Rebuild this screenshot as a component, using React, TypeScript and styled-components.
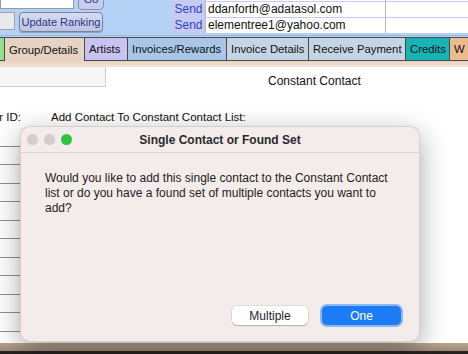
import React from "react";
import styled, { createGlobalStyle } from "styled-components";

const GlobalStyle = createGlobalStyle`
  html, body {
    margin: 0;
    padding: 0;
    background: #ffffff;
    overflow: hidden;
  }
  body {
    font-family: "Liberation Sans", Arial, sans-serif;
  }
`;

interface ITabProps {
  width: number;
  bg: string;
  active?: boolean;
}

interface ICellProps {
  width: number;
}

const Page = styled.div`
  position: relative;
  width: 468px;
  height: 354px;
  overflow: hidden;
  display: flex;
  flex-direction: column;
  background: #ffffff;
`;

const Header = styled.div`
  height: 35px;
  background: #b3d2f6;
  display: flex;
  justify-content: space-between;
  border-bottom: 1px solid #9fb8d8;
`;

const LeftControls = styled.div`
  display: flex;
  flex-direction: column;
  gap: 2px;
`;

const ControlRow = styled.div`
  display: flex;
  gap: 4px;
  align-items: flex-start;
`;

const FindInput = styled.div`
  width: 72px;
  height: 8px;
  background: #ffffff;
  border: 1px solid #9a9a9a;
  border-top: none;
`;

const GoButton = styled.div`
  width: 24px;
  height: 20px;
  margin-top: -12px;
  background: #c8cdf0;
  border: 1px solid #8c8fb0;
  border-radius: 4px;
  color: #2b3585;
  font-size: 11px;
  display: flex;
  align-items: center;
  justify-content: center;
`;

const GreyInput = styled.div`
  width: 14px;
  height: 16px;
  background: #e9e9ec;
  border: 1px solid #a0a0a8;
  border-left: none;
`;

const RankButton = styled.div`
  width: 82px;
  height: 18px;
  background: linear-gradient(#d6dcf2, #bcc4e2);
  border: 1px solid #7d829c;
  border-radius: 4px;
  color: #2b3585;
  font-size: 11px;
  display: flex;
  align-items: center;
  justify-content: center;
  box-shadow: 0 1px 1px rgba(0, 0, 0, 0.25);
`;

const SendPanel = styled.div`
  width: 297px;
  height: 33px;
  background: #c7cbf3;
  border-bottom-left-radius: 6px;
  overflow: hidden;
  display: flex;
  flex-direction: column;
  gap: 1px;
  padding-left: 1px;
  box-sizing: border-box;
`;

const SendRow = styled.div`
  display: flex;
  height: 15px;
  flex-shrink: 0;
  &:first-child {
    margin-top: -14px;
  }
`;

const SendLabel = styled.div`
  width: 33px;
  color: #3442c2;
  font-size: 12px;
  line-height: 15px;
  text-align: center;
`;

const Cell = styled.div`
  width: ${(props: ICellProps) => props.width}px;
  background: #ffffff;
  border-left: 1px solid #b8b8b8;
  font-size: 12px;
  line-height: 15px;
  padding-left: 2px;
  box-sizing: border-box;
  color: #111111;
  white-space: nowrap;
`;

const TabBar = styled.div`
  height: 25px;
  display: flex;
  background: #b3d2f6;
  padding-top: 1px;
  box-sizing: border-box;
`;

const Tab = styled.div`
  width: ${(props: ITabProps) => props.width}px;
  flex-shrink: 0;
  background: ${(props: ITabProps) => props.bg};
  border: 1px solid #4a4a4a;
  border-left: none;
  border-bottom: ${(props: ITabProps) =>
    props.active ? "none" : "1px solid #4a4a4a"};
  font-size: 11.3px;
  color: #111111;
  display: flex;
  align-items: center;
  padding-left: 4px;
  box-sizing: border-box;
  white-space: nowrap;
  overflow: hidden;
`;

const TabFooter = styled.div`
  height: 6px;
  background: linear-gradient(#e6d3c3, #efe4da);
`;

const Content = styled.div`
  flex: 1;
  display: flex;
  flex-direction: column;
`;

const TopRow = styled.div`
  height: 20px;
  display: flex;
  align-items: center;
`;

const LeftBox = styled.div`
  width: 106px;
  height: 20px;
  background: #f7f7f7;
  border-right: 1px solid #cfcfcf;
  border-bottom: 1px solid #cfcfcf;
  box-sizing: border-box;
`;

const SectionTitle = styled.div`
  margin-left: 162px;
  margin-top: 7px;
  font-size: 12px;
  color: #111111;
`;

const FieldRow = styled.div`
  margin-top: 24px;
  display: flex;
  font-size: 11.5px;
  color: #111111;
  height: 14px;
`;

const FieldLabel = styled.div`
  width: 21px;
  margin-right: 30px;
  overflow: hidden;
  white-space: nowrap;
  display: flex;
  justify-content: flex-end;
`;

const ListColumn = styled.div`
  margin-top: 3px;
  width: 40px;
  display: flex;
  flex-direction: column;
`;

const ListRow = styled.div`
  height: 18.5px;
  border-bottom: 1.5px solid #8f8f8f;
  background: linear-gradient(90deg, #ffffff 40%, #dcdcdc);
  box-sizing: border-box;
  flex-shrink: 0;
`;

const BottomEdge = styled.div`
  height: 11px;
  background: linear-gradient(#b8a692, #9e8a76 70%, #2e2a28 72%, #1e1c1c);
`;

const Dialog = styled.div`
  position: absolute;
  left: 20px;
  top: 126px;
  width: 400px;
  height: 216px;
  background: #f4ecea;
  border-radius: 10px;
  border: 1px solid rgba(0, 0, 0, 0.12);
  box-sizing: border-box;
  box-shadow: 0 8px 28px rgba(0, 0, 0, 0.35);
  display: flex;
  flex-direction: column;
`;

const TitleBar = styled.div`
  position: relative;
  height: 25px;
  border-bottom: 1px solid #ddd3d0;
  display: flex;
  align-items: center;
  justify-content: center;
`;

const Lights = styled.div`
  position: absolute;
  left: 6px;
  top: 7px;
  display: flex;
  gap: 6px;
`;

const Light = styled.div`
  width: 11px;
  height: 11px;
  border-radius: 50%;
  background: ${(props: { color: string }) => props.color};
`;

const DialogTitle = styled.div`
  font-size: 12px;
  font-weight: bold;
  color: #2a2a2a;
`;

const Message = styled.div`
  margin: 18px 0 0 24px;
  width: 356px;
  font-size: 12px;
  line-height: 15px;
  color: #1c1c1c;
  flex: 1;
`;

const ButtonRow = styled.div`
  display: flex;
  justify-content: flex-end;
  align-items: center;
  gap: 14px;
  padding: 0 18px 16px 0;
`;

const DialogButton = styled.div`
  width: ${(props: { primary?: boolean }) => (props.primary ? "79px" : "76px")};
  height: 19px;
  border-radius: 5px;
  font-size: 12px;
  display: flex;
  align-items: center;
  justify-content: center;
  background: ${(props: { primary?: boolean }) =>
    props.primary ? "#1d7bf6" : "#ffffff"};
  color: ${(props: { primary?: boolean }) =>
    props.primary ? "#ffffff" : "#1e1e1e"};
  box-shadow: ${(props: { primary?: boolean }) =>
    props.primary
      ? "0 0 0 2px #8ab8f4"
      : "0 0 0 0.5px rgba(0,0,0,0.15), 0 1px 1px rgba(0,0,0,0.2)"};
`;

const tabs = [
  { label: "", width: 5, bg: "#8fe08f" },
  { label: "Group/Details", width: 80, bg: "#e6d3c3", active: true },
  { label: "Artists", width: 43, bg: "#c9c3f2" },
  { label: "Invoices/Rewards", width: 99, bg: "#a9c6e8" },
  { label: "Invoice Details", width: 82, bg: "#c6d5e6" },
  { label: "Receive Payment", width: 97, bg: "#c6d5e6" },
  { label: "Credits", width: 44, bg: "#16b4b4" },
  { label: "W", width: 30, bg: "#ebbb8e" },
];

const sendRows = ["", "ddanforth@adatasol.com", "elementree1@yahoo.com"];

const App = () => {
  return (
    <Page>
      <GlobalStyle />
      <Header>
        <LeftControls>
          <ControlRow>
            <FindInput />
            <GoButton>Go</GoButton>
          </ControlRow>
          <ControlRow>
            <GreyInput />
            <RankButton>Update Ranking</RankButton>
          </ControlRow>
        </LeftControls>
        <SendPanel>
          {sendRows.map((email, i) => (
            <SendRow key={i}>
              <SendLabel>Send</SendLabel>
              <Cell width={180}>{email}</Cell>
              <Cell width={83} />
            </SendRow>
          ))}
        </SendPanel>
      </Header>
      <TabBar>
        {tabs.map(tab => (
          <Tab key={tab.label} width={tab.width} bg={tab.bg} active={tab.active}>
            {tab.label}
          </Tab>
        ))}
      </TabBar>
      <TabFooter />
      <Content>
        <TopRow>
          <LeftBox />
          <SectionTitle>Constant Contact</SectionTitle>
        </TopRow>
        <FieldRow>
          <FieldLabel>
            <span>Member ID:</span>
          </FieldLabel>
          <div>Add Contact To Constant Contact List:</div>
        </FieldRow>
        <ListColumn>
          {Array.from({ length: 11 }).map((_, i) => (
            <ListRow key={i} />
          ))}
        </ListColumn>
      </Content>
      <BottomEdge />
      <Dialog>
        <TitleBar>
          <Lights>
            <Light color="#d3cdcb" />
            <Light color="#d3cdcb" />
            <Light color="#2cc53f" />
          </Lights>
          <DialogTitle>Single Contact or Found Set</DialogTitle>
        </TitleBar>
        <Message>
          Would you like to add this single contact to the Constant Contact
          list or do you have a found set of multiple contacts you want to
          add?
        </Message>
        <ButtonRow>
          <DialogButton>Multiple</DialogButton>
          <DialogButton primary>One</DialogButton>
        </ButtonRow>
      </Dialog>
    </Page>
  );
};

export default App;
